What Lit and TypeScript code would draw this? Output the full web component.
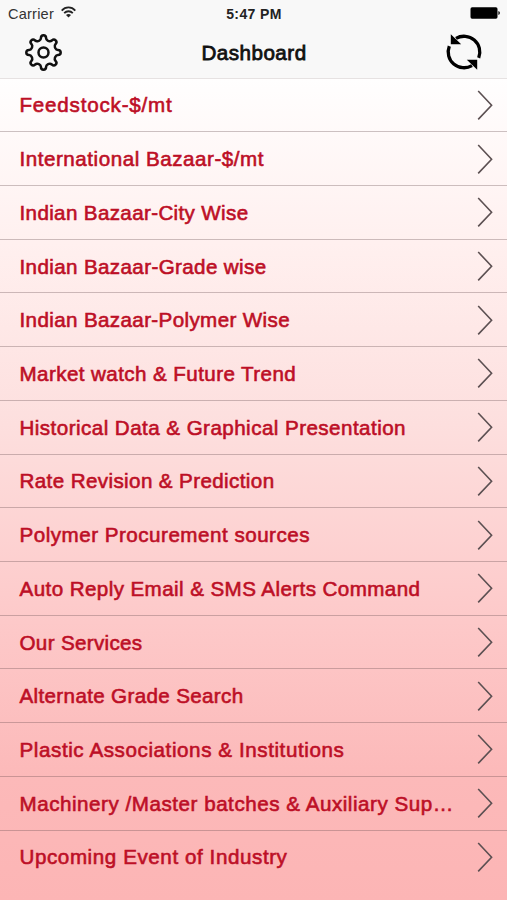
import { LitElement, html, css } from "lit";
import { customElement, property } from "lit/decorators.js";

const ROWS: { label: string; width: number }[] = [
  { label: "Feedstock-$/mt", width: 153 },
  { label: "International Bazaar-$/mt", width: 244.5 },
  { label: "Indian Bazaar-City Wise", width: 229 },
  { label: "Indian Bazaar-Grade wise", width: 247 },
  { label: "Indian Bazaar-Polymer Wise", width: 270.5 },
  { label: "Market watch & Future Trend", width: 277 },
  { label: "Historical Data & Graphical Presentation", width: 386.5 },
  { label: "Rate Revision & Prediction", width: 255 },
  { label: "Polymer Procurement sources", width: 290.5 },
  { label: "Auto Reply Email & SMS Alerts Command", width: 402 },
  { label: "Our Services", width: 123 },
  { label: "Alternate Grade Search", width: 224 },
  { label: "Plastic Associations & Institutions", width: 326 },
  { label: "Machinery /Master batches & Auxiliary Sup…", width: 435.5 },
  { label: "Upcoming Event of Industry", width: 268 },
];

const FONT = '20.6px "Liberation Sans"';

const tracking = (label: string, width: number): number => {
  const ctx = document.createElement("canvas").getContext("2d")!;
  ctx.font = FONT;
  return (width - ctx.measureText(label).width) / label.length;
};

// Outline of an eight-toothed cog centred on the origin.
const cogPath = (): string => {
  let d = "";
  for (let k = 0; k < 8; k++) {
    const a = (k * Math.PI) / 4;
    const p = (x: number, y: number) =>
      `${(x * Math.cos(a) - y * Math.sin(a)).toFixed(2)} ${(x * Math.sin(a) + y * Math.cos(a)).toFixed(2)}`;
    d += `${k ? "L" : "M"}${p(-4.2, -11.9)}Q${p(-2.7, -12.6)} ${p(-2.6, -14.4)}`;
    d += `Q${p(-2.5, -17.2)} ${p(0, -17.2)}Q${p(2.5, -17.2)} ${p(2.6, -14.4)}`;
    d += `Q${p(2.7, -12.6)} ${p(4.2, -11.9)}`;
  }
  return d + "Z";
};

@customElement("menu-row")
export class MenuRow extends LitElement {
  @property() label = "";
  @property({ type: Number }) width = 0;

  static styles = css`
    :host {
      display: flex;
      align-items: center;
      justify-content: space-between;
      height: 53.72px;
      box-sizing: border-box;
      padding: 0 14px 0 19.5px;
      border-bottom: 1.3px solid rgba(95, 70, 75, 0.32);
    }
    :host(:last-child) {
      border-bottom-color: transparent;
    }
    .label {
      font: 20.6px/26px "Liberation Sans", Arial, sans-serif;
      color: #bd0f26;
      -webkit-text-stroke: 0.6px #bd0f26;
      white-space: nowrap;
      padding-top: 1px;
    }
    svg {
      flex: none;
    }
  `;

  render() {
    return html`
      <span class="label" style="letter-spacing:${tracking(this.label, this.width).toFixed(3)}px">${this.label}</span>
      <svg width="16" height="32" viewBox="0 0 16 32">
        <path d="M1.2 2L14.6 16.2L1.2 30.4" fill="none" stroke="#5c5052" stroke-width="1.6" />
      </svg>
    `;
  }
}

@customElement("app-root")
export class AppRoot extends LitElement {
  static styles = css`
    :host {
      display: flex;
      flex-direction: column;
      width: 507px;
      height: 900px;
      overflow: hidden;
      font-family: "Liberation Sans", Arial, sans-serif;
      color: #111;
      background: #fcb5b5;
    }
    .top {
      height: 78.5px;
      box-sizing: border-box;
      background: #f8f8f8;
      border-bottom: 1px solid #e6e2e2;
      flex: none;
    }
    .status,
    .nav {
      display: grid;
      grid-template-columns: 1fr auto 1fr;
      align-items: center;
    }
    .status {
      height: 26px;
      padding: 0 7px 0 8px;
      font-size: 14.6px;
    }
    .carrier {
      display: flex;
      align-items: center;
      gap: 7px;
      color: #333;
      letter-spacing: 0.2px;
    }
    .carrier span {
      margin-top: 1px;
    }
    .carrier svg {
      margin-top: -2px;
    }
    .time {
      font-weight: bold;
      font-size: 14px;
      letter-spacing: 0.4px;
      color: #222;
      margin-top: 1px;
    }
    .end {
      justify-self: end;
    }
    .nav {
      height: 52px;
      padding: 0 23px 0 24px;
    }
    .title {
      font-size: 20.6px;
      letter-spacing: 0.5px;
      -webkit-text-stroke: 0.8px #111;
      padding-top: 1px;
    }
    .list {
      flex: 1;
      background: linear-gradient(#fffefe, #fff0ef 20%, #fddfde 42%, #fdcaca 65%, #fcb9b9 85%, #fcb5b5);
    }
    svg {
      display: block;
    }
  `;

  render() {
    return html`
      <header class="top">
        <div class="status">
          <div class="carrier">
            <span>Carrier</span>
            <svg width="15" height="12" viewBox="0 0 15 12" fill="none" stroke="#222" stroke-width="1.8">
              <path d="M0.7 4.6C4.5 0.4 10.5 0.4 14.3 4.6M3.2 7.1C5.6 4.6 9.4 4.6 11.8 7.1" />
              <path d="M7.5 11.4L5 8.9Q7.5 6.9 10 8.9Z" fill="#222" stroke="none" />
            </svg>
          </div>
          <div class="time">5:47 PM</div>
          <svg class="end" width="30" height="12" viewBox="0 0 30 12">
            <rect x="0.5" y="0.3" width="27" height="11.4" rx="1.6" fill="#000" />
            <path d="M28.3 4Q30 4.3 30 6T28.3 8Z" fill="#222" />
          </svg>
        </div>
        <div class="nav">
          <svg width="39" height="39" viewBox="-19.5 -19.5 39 39" fill="none" stroke="#111" stroke-width="2.5" stroke-linejoin="round">
            <path d=${cogPath()} />
            <circle r="5" />
          </svg>
          <div class="title">Dashboard</div>
          <svg class="end" width="40" height="40" viewBox="-20 -20 40 40">
            <path
              d="M-8 -13.6A15.8 15.8 0 0 1 14.7 5.8M8 13.6A15.8 15.8 0 0 1 -14.7 -5.8"
              fill="none" stroke="#000" stroke-width="3.3"
            />
            <path d="M-13.2 -17.8V-7.8H-2.8ZM13.2 17.8V7.8H2.8Z" fill="#000" />
          </svg>
        </div>
      </header>
      <main class="list">
        ${ROWS.map((r) => html`<menu-row .label=${r.label} .width=${r.width}></menu-row>`)}
      </main>
    `;
  }
}
